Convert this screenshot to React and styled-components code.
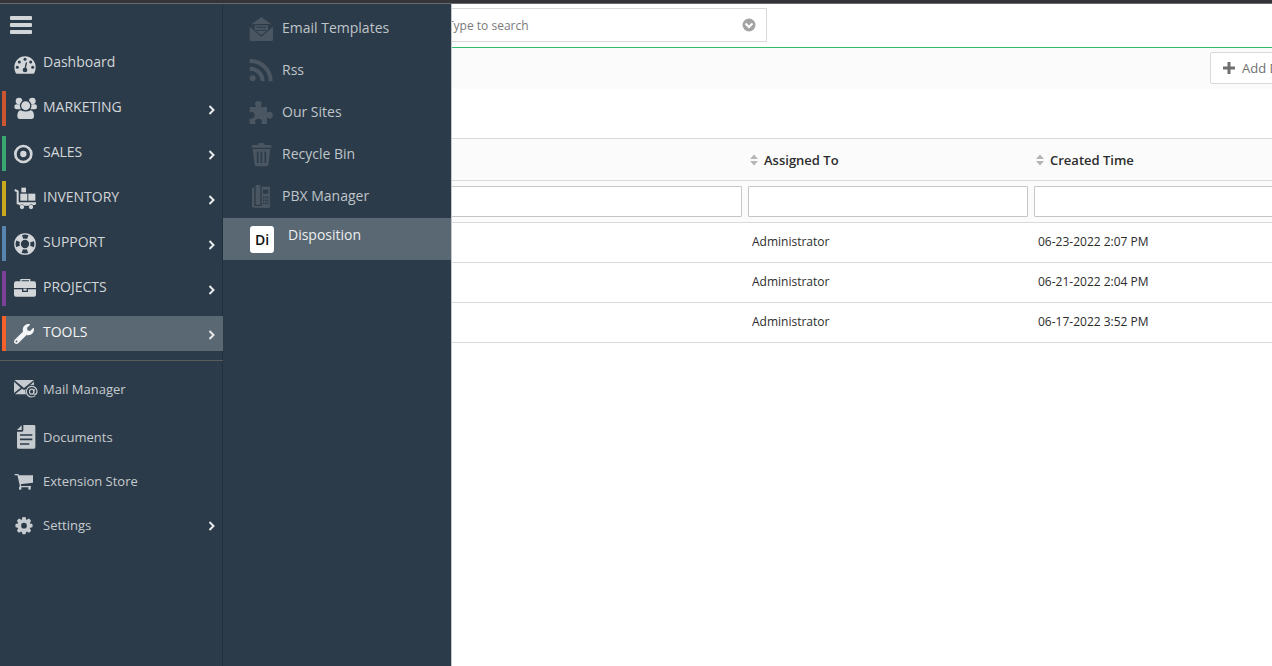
import React from "react";
import styled, { createGlobalStyle } from "styled-components";
import { FaWrench } from "react-icons/fa";

const NAV = "#2c3b49";
const ACTIVE = "#5a6873";

const GlobalStyle = createGlobalStyle`
  *, *::before, *::after { box-sizing: border-box; }
  body {
    margin: 0;
    background: #fff;
    color: #2c2c2c;
    font-family: "Open Sans", sans-serif;
    font-size: 12px;
  }
  a { color: inherit; text-decoration: none; }
  button, input { font: inherit; }
  ul { list-style: none; margin: 0; padding: 0; }
`;

const Page = styled.div`
  display: flex;
  flex-direction: column;
  min-height: 100vh;
  overflow: hidden;
`;

const TopStrip = styled.div`
  height: 4px;
  background: #353539;
  border-bottom: 1px solid #66686a;
`;

const Body = styled.div`
  display: flex;
  flex: 1;
`;

/* Left navigation */

const Sidebar = styled.nav`
  position: relative;
  z-index: 1;
  flex: 0 0 223px;
  background: ${NAV};
  color: #d2d6d9;
  box-shadow: inset -1px 0 0 #22303c;
`;

const MenuToggle = styled.button`
  display: block;
  margin: 9px 0 0 8px;
  padding: 2px;
  border: 0;
  background: none;
  color: inherit;
  line-height: 0;
`;

const IconSlot = styled.span`
  flex: 0 0 24px;
  height: 24px;
  display: flex;
  align-items: center;
  svg { display: block; }
`;

const ModuleList = styled.ul`
  display: flex;
  flex-direction: column;
  gap: 10px;
  margin-left: 2px;
  && { padding: 9px 0; }
`;

const Module = styled.a`
  display: flex;
  align-items: center;
  height: 35px;
  padding: 0 7px 0 8px;
  border-left: 4px solid ${(p) => p.$accent || "transparent"};
  background: ${(p) => (p.$active ? ACTIVE : "transparent")};
  color: ${(p) => (p.$active ? "#f4f5f6" : "inherit")};
  font-size: 14px;
`;

const Label = styled.span`
  flex: 1;
  padding: 0 0 4px 5px;
`;

const Rule = styled.hr`
  height: 1px;
  margin: 0;
  border: 0;
  background: #5c5b5c;
`;

const ToolList = styled.ul`
  && { padding-top: 6px; }
  li:first-child { margin-bottom: 4px; }
`;

const Tool = styled.a`
  display: flex;
  align-items: center;
  height: 44px;
  padding: 0 7px 0 14px;
  font-size: 13px;
  color: #c6cbcf;
`;

const ToolLabel = styled.span`
  flex: 1;
  padding: 0 0 0 5px;
`;

/* Fly-out panel that covers part of the record list */

const Flyout = styled.ul`
  position: absolute;
  top: 0;
  bottom: 0;
  left: 100%;
  width: 229px;
  && { padding-top: 4px; }
  background: ${NAV};
  border-right: 1px solid #c3c8cc;
`;

const FlyoutItem = styled.a`
  display: flex;
  align-items: center;
  height: 42px;
  padding-left: 26px;
  gap: ${(p) => (p.$active ? 14 : 9)}px;
  background: ${(p) => (p.$active ? ACTIVE : "transparent")};
  color: ${(p) => (p.$active ? "#eceeef" : "#bfc5c9")};
  font-size: 14px;
`;

const FlyoutLabel = styled.span`
  padding-bottom: ${(p) => (p.$raised ? 10 : 4)}px;
`;

const DimIcon = styled(IconSlot)`
  color: #4a5661;
`;

const Initials = styled.span`
  width: 24px;
  height: 27px;
  margin-left: 1px;
  border-radius: 3px;
  background: #fff;
  color: #111;
  font-size: 14px;
  font-weight: 600;
  line-height: 27px;
  text-align: center;
`;

/* Record list */

const Main = styled.main`
  flex: 1;
  min-width: 0;
  overflow: hidden;
`;

const Canvas = styled.div`
  width: calc(100% + 90px);
`;

const Header = styled.header`
  height: 44px;
  padding: 4px 0 0 217px;
  border-bottom: 1px solid #2fbd6c;
`;

const SearchBox = styled.div`
  display: flex;
  align-items: center;
  width: 327px;
  height: 34px;
  padding: 0 10px 0 6px;
  border: 1px solid #d9d9d9;
`;

const SearchInput = styled.input`
  flex: 1;
  min-width: 0;
  padding: 0;
  border: 0;
  outline: 0;
  background: none;
  &::placeholder { color: #7a7a7a; opacity: 1; }
`;

const SearchMore = styled.button`
  padding: 0;
  border: 0;
  background: none;
  line-height: 0;
`;

const ActionBar = styled.div`
  display: flex;
  justify-content: flex-end;
  align-items: flex-start;
  height: 41px;
  padding: 4px 6px 0 0;
  background: #fbfbfb;
`;

const AddButton = styled.button`
  display: flex;
  align-items: center;
  gap: 7px;
  width: 146px;
  height: 32px;
  padding: 0 12px;
  border: 1px solid #d9d9d9;
  border-radius: 2px;
  background: #fff;
  color: #6f6f6f;
  font-size: 13px;
  white-space: nowrap;
`;

const Table = styled.table`
  width: 100%;
  margin-top: 49px;
  table-layout: fixed;
  border-spacing: 0;
  border-top: 1px solid #dadada;
`;

const Col = styled.col`
  width: ${(p) => p.$w};
`;

const HeadCell = styled.th`
  height: 42px;
  padding: 0 5px;
  border-bottom: 1px solid #dadada;
  background: #fbfbfb;
  font-weight: 600;
  font-size: 13px;
  text-align: left;
`;

const SortLabel = styled.span`
  display: flex;
  align-items: center;
  gap: 6px;
`;

const FilterCell = styled.td`
  height: 42px;
  padding: 0 3px;
  border-bottom: 1px solid #dadada;
  background: #fbfbfb;
`;

const FilterInput = styled.input`
  display: block;
  width: 100%;
  height: 31px;
  padding: 0 6px;
  border: 1px solid #c6c6c6;
  border-radius: 1px;
  background: #fff;
`;

const Cell = styled.td`
  height: 40px;
  padding: 0 7px 2px;
  border-bottom: 1px solid #dadada;
`;

/* Icons are drawn on a 72-unit grid and shown at 24px */

const Glyph = ({ children }) => (
  <svg width="24" height="24" viewBox="0 0 72 72" fill="currentColor" aria-hidden="true">
    {children}
  </svg>
);

const Gauge = () => (
  <Glyph>
    <path d="M33 13A32 33 0 0 1 65 46Q65 56 61 63Q60 65 57 65H9Q6 65 5 63Q1 56 1 46A32 33 0 0 1 33 13Z" />
    <g fill={NAV}>
      <circle cx="33" cy="22" r="4.500" />
      <circle cx="16" cy="30" r="4.500" />
      <circle cx="50" cy="30" r="4.500" />
      <circle cx="10" cy="46" r="4.500" />
      <circle cx="56" cy="46" r="4.500" />
      <circle cx="33" cy="54" r="7" />
    </g>
    <path d="M33 52L37 33" stroke={NAV} strokeWidth="4" strokeLinecap="round" />
  </Glyph>
);

const People = () => (
  <Glyph>
    <circle cx="15" cy="12" r="10" />
    <circle cx="55" cy="12" r="10" />
    <rect x="1" y="22" width="24" height="15" rx="7" />
    <rect x="45" y="22" width="24" height="15" rx="7" />
    <circle cx="35" cy="26" r="15.500" stroke={NAV} strokeWidth="4" />
    <path d="M20 40Q35 47 50 40Q60 42 60 57Q60 66 52 66H18Q10 66 10 57Q10 42 20 40Z" />
  </Glyph>
);

const Target = () => (
  <Glyph>
    <circle cx="28" cy="36" r="24" fill="none" stroke="currentColor" strokeWidth="8" />
    <circle cx="28" cy="36" r="9.500" />
  </Glyph>
);

const Trolley = () => (
  <Glyph>
    <path d="M2 9L11 13V49H66" fill="none" stroke="currentColor" strokeWidth="6" />
    <rect x="22" y="2" width="14" height="14" />
    <rect x="19" y="20" width="21" height="21" />
    <rect x="43" y="20" width="21" height="21" />
    <path d="M14 49H64V54H57Q51 47 44 56H31Q24 48 18 55H14Z" />
    <circle cx="24" cy="60" r="6.500" />
    <circle cx="51" cy="60" r="6.500" />
  </Glyph>
);

const Lifebuoy = () => (
  <Glyph>
    <g fill="none" stroke="currentColor">
      <circle cx="33" cy="36" r="30.500" strokeWidth="4" />
      <circle cx="33" cy="36" r="14.500" strokeWidth="4" />
      <circle
        cx="33" cy="36" r="22" strokeWidth="16"
        strokeDasharray="19 15.557"
        transform="rotate(20.300 33 36)"
      />
    </g>
  </Glyph>
);

const Briefcase = () => (
  <Glyph>
    <path d="M21 15V8H47V15" fill="none" stroke="currentColor" strokeWidth="4" />
    <path d="M6 13H60Q66 13 66 20V33H0V20Q0 13 6 13Z" />
    <path d="M0 37H24V45H42V37H66V53Q66 59 60 59H6Q0 59 0 53Z" />
    <rect x="28" y="35" width="10" height="6" />
  </Glyph>
);

const MailAt = () => (
  <Glyph>
    <path d="M1 9H60L30 33Z" />
    <path d="M0 14L20 32L0 48Z" />
    <path d="M60 14V30L44 28Z" />
    <path d="M3 52L24 35L30 39L37 35L40 52Z" />
    <circle cx="54" cy="43" r="20" fill={NAV} />
    <g fill="none" stroke="currentColor" strokeWidth="3.500">
      <path d="M64 56Q59 60 53 60A16 16 0 1 1 69 42Q69 52 63 52Q58 52 59 46L61 36" />
      <ellipse cx="53" cy="44" rx="6.500" ry="7.500" />
    </g>
  </Glyph>
);

const Document = () => (
  <Glyph>
    <path d="M28 0H60Q64 0 64 4V67Q64 71 60 71H13Q9 71 9 67V20H24Q28 20 28 16Z" />
    <path d="M23 1V15H9Z" />
    <path d="M18 30H55M18 43H55M18 57H46" stroke={NAV} strokeWidth="5" />
  </Glyph>
);

const Cart = () => (
  <Glyph>
    <path d="M2 17H12L20 53H51" fill="none" stroke="currentColor" strokeWidth="4" />
    <path d="M13 19H57V41L18 46Z" />
    <rect x="15" y="53" width="7" height="9" />
    <rect x="43" y="53" width="7" height="9" />
  </Glyph>
);

const Gear = () => (
  <Glyph>
    <circle cx="30" cy="38" r="14" fill="none" stroke="currentColor" strokeWidth="11" />
    {[0, 45, 90, 135, 180, 225, 270, 315].map((a) => (
      <path key={a} d="M25 13Q30 11 35 13L37 23H23Z" transform={`rotate(${a} 30 38)`} />
    ))}
  </Glyph>
);

const OpenMail = () => (
  <Glyph>
    <path d="M37 0L66 21Q64 25 61 21H13Q10 25 8 21Z" />
    <path d="M2 29L37 59L72 29V68Q72 72 68 72H6Q2 72 2 68Z" />
    <path d="M17 25H57V38L37 55L17 38Z" />
    <path d="M22 31H52M22 40H52" stroke={NAV} strokeWidth="3" />
  </Glyph>
);

const Feed = () => (
  <Glyph>
    <circle cx="11" cy="58" r="9" />
    <g fill="none" stroke="currentColor" strokeWidth="12">
      <path d="M2 6A61 61 0 0 1 65 67" />
      <path d="M2 29A38 38 0 0 1 41 67" />
    </g>
  </Glyph>
);

const Puzzle = () => (
  <Glyph>
    <path d="M2 18H22Q18 14 18 9A10 9 0 0 1 38 9Q38 14 34 18H54V36Q57 32 62 32A9 10 0 0 1 62 53Q57 53 54 49V69H36Q39 66 39 61Q38 53 29 53Q19 53 18 61Q18 66 21 69H2V52Q5 54 9 53Q17 51 17 43Q17 34 9 33Q5 32 2 35Z" />
  </Glyph>
);

const Trash = () => (
  <Glyph>
    <path d="M28 6Q28 0 34 0H41Q47 0 47 6H64Q67 6 67 9V14H8V9Q8 6 11 6Z" />
    <path d="M11 18H64L58 65Q57 70 51 70H24Q18 70 17 65Z" />
    <path d="M26 26V60M37 26V60M49 26V60" stroke={NAV} strokeWidth="5" />
  </Glyph>
);

const DeskPhone = () => (
  <Glyph>
    <path d="M16 7V63H60V68H13Q9 68 9 64V12Q9 7 16 7Z" />
    <rect x="20" y="0" width="14" height="60" rx="4" />
    <path d="M38 5H60Q63 5 63 8V65Q63 68 60 68H38Z" />
    <rect x="42" y="14" width="16" height="12" fill={NAV} />
    <path d="M42 37H59M42 46H59M42 55H59" stroke={NAV} strokeWidth="5" strokeDasharray="4 2.500" />
  </Glyph>
);

const Chevron = () => (
  <svg width="8" height="12" viewBox="0 0 8 12" fill="none" stroke="#e8eaeb" strokeWidth="2" aria-hidden="true">
    <path d="M1.500 3L5.500 7L1.500 11" />
  </svg>
);

const SortArrows = () => (
  <svg width="8" height="12" viewBox="0 0 8 12" fill="#b5b5b5" aria-hidden="true">
    <path d="M0 5L4 0.500L8 5ZM0 7L4 11.500L8 7Z" />
  </svg>
);

const MODULES = [
  { name: "MARKETING", icon: <People />, accent: "#cc5630" },
  { name: "SALES", icon: <Target />, accent: "#3aa772" },
  { name: "INVENTORY", icon: <Trolley />, accent: "#cba91c" },
  { name: "SUPPORT", icon: <Lifebuoy />, accent: "#5885ad" },
  { name: "PROJECTS", icon: <Briefcase />, accent: "#7b4199" },
  { name: "TOOLS", icon: <FaWrench size={20} />, accent: "#f5602b", active: true },
];

const TOOLS = [
  { name: "Mail Manager", icon: <MailAt /> },
  { name: "Documents", icon: <Document /> },
  { name: "Extension Store", icon: <Cart /> },
  { name: "Settings", icon: <Gear />, more: true },
];

const FLYOUT = [
  { name: "Email Templates", icon: <OpenMail /> },
  { name: "Rss", icon: <Feed /> },
  { name: "Our Sites", icon: <Puzzle /> },
  { name: "Recycle Bin", icon: <Trash /> },
  { name: "PBX Manager", icon: <DeskPhone /> },
];

const ROWS = ["06-23-2022 2:07 PM", "06-21-2022 2:04 PM", "06-17-2022 3:52 PM"];

export default function App() {
  return (
    <Page>
      <GlobalStyle />
      <TopStrip />
      <Body>
        <Sidebar aria-label="Modules">
          <MenuToggle type="button" aria-label="Toggle menu">
            <svg width="22" height="20" viewBox="0 0 22 20" fill="currentColor" aria-hidden="true">
              <rect y="1" width="22" height="4" rx="1" />
              <rect y="8" width="22" height="4" rx="1" />
              <rect y="15" width="22" height="4" rx="1" />
            </svg>
          </MenuToggle>
          <ModuleList>
            <li>
              <Module href="#dashboard">
                <IconSlot><Gauge /></IconSlot>
                <Label>Dashboard</Label>
              </Module>
            </li>
            {MODULES.map((m) => (
              <li key={m.name}>
                <Module href={`#${m.name.toLowerCase()}`} $accent={m.accent} $active={m.active}>
                  <IconSlot>{m.icon}</IconSlot>
                  <Label>{m.name}</Label>
                  <Chevron />
                </Module>
              </li>
            ))}
          </ModuleList>
          <Rule />
          <ToolList>
            {TOOLS.map((t) => (
              <li key={t.name}>
                <Tool href={`#${t.name.toLowerCase().replace(" ", "-")}`}>
                  <IconSlot>{t.icon}</IconSlot>
                  <ToolLabel>{t.name}</ToolLabel>
                  {t.more && <Chevron />}
                </Tool>
              </li>
            ))}
          </ToolList>
          <Flyout>
            {FLYOUT.map((f) => (
              <li key={f.name}>
                <FlyoutItem href={`#${f.name.toLowerCase().replace(" ", "-")}`}>
                  <DimIcon>{f.icon}</DimIcon>
                  <FlyoutLabel>{f.name}</FlyoutLabel>
                </FlyoutItem>
              </li>
            ))}
            <li>
              <FlyoutItem href="#disposition" $active>
                <Initials>Di</Initials>
                <FlyoutLabel $raised>Disposition</FlyoutLabel>
              </FlyoutItem>
            </li>
          </Flyout>
        </Sidebar>
        <Main>
          <Canvas>
            <Header>
              <SearchBox>
                <SearchInput type="text" placeholder="Type to search" aria-label="Search" />
                <SearchMore type="button" aria-label="Advanced search">
                  <svg width="14" height="14" viewBox="0 0 14 14" aria-hidden="true">
                    <circle cx="7" cy="7" r="6.500" fill="#a3a3a3" />
                    <path d="M3.500 5.500L7 9L10.500 5.500" fill="none" stroke="#fff" strokeWidth="2" />
                  </svg>
                </SearchMore>
              </SearchBox>
            </Header>
            <ActionBar>
              <AddButton type="button">
                <svg width="12" height="12" viewBox="0 0 12 12" fill="currentColor" aria-hidden="true">
                  <path d="M4.500 0H7.500V4.500H12V7.500H7.500V12H4.500V7.500H0V4.500H4.500Z" />
                </svg>
                Add Disposition
              </AddButton>
            </ActionBar>
            <Table>
              <colgroup>
                <Col $w="200px" />
                <Col $w="322px" />
                <Col $w="286px" />
                <Col $w="286px" />
                <Col $w="auto" />
              </colgroup>
              <thead>
                <tr>
                  <HeadCell as="td" />
                  <HeadCell as="td" />
                  <HeadCell><SortLabel><SortArrows />Assigned To</SortLabel></HeadCell>
                  <HeadCell><SortLabel><SortArrows />Created Time</SortLabel></HeadCell>
                  <HeadCell as="td" />
                </tr>
                <tr>
                  <FilterCell />
                  <FilterCell><FilterInput type="text" aria-label="Filter records" /></FilterCell>
                  <FilterCell><FilterInput type="text" aria-label="Filter by Assigned To" /></FilterCell>
                  <FilterCell><FilterInput type="text" aria-label="Filter by Created Time" /></FilterCell>
                  <FilterCell />
                </tr>
              </thead>
              <tbody>
                {ROWS.map((time) => (
                  <tr key={time}>
                    <Cell />
                    <Cell />
                    <Cell>Administrator</Cell>
                    <Cell>{time}</Cell>
                    <Cell />
                  </tr>
                ))}
              </tbody>
            </Table>
          </Canvas>
        </Main>
      </Body>
    </Page>
  );
}
